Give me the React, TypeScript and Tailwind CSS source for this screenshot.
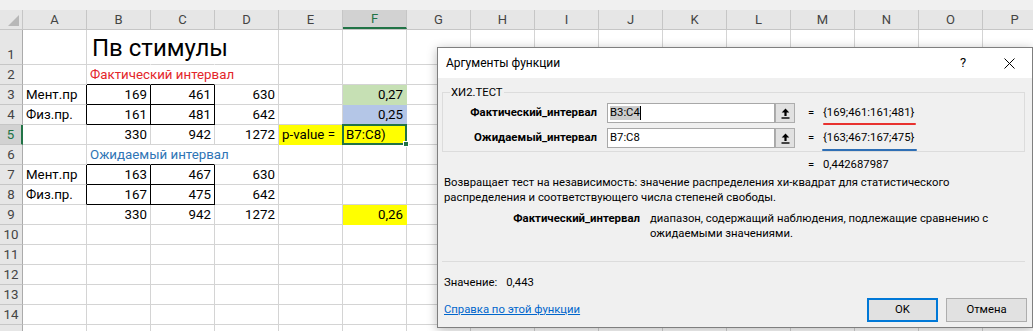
import React from 'react';

type CellSpec = {
  t?: string;
  right?: boolean;
  big?: boolean;
  txt?: string;
  bg?: string;
  rc?: string;
  bc?: string;
  sel?: boolean;
};

const COLS = ['A', 'B', 'C', 'D', 'E', 'F', 'G', 'H', 'I', 'J', 'K', 'L', 'M', 'N', 'O', 'P'];

const ROWS: Record<number, Record<string, CellSpec>> = {
  1: {
    B: { t: 'Пв стимулы', big: true, rc: 'border-r-white' },
    C: { rc: 'border-r-white' },
  },
  2: {
    B: { t: 'Фактический интервал', txt: 'text-[#e3262b]', rc: 'border-r-white', bc: 'border-b-black' },
    C: { rc: 'border-r-white', bc: 'border-b-black' },
  },
  3: {
    A: { t: 'Мент.пр', rc: 'border-r-black' },
    B: { t: '169', right: true, rc: 'border-r-black', bc: 'border-b-black' },
    C: { t: '461', right: true, rc: 'border-r-black', bc: 'border-b-black' },
    D: { t: '630', right: true },
    F: { t: '0,27', right: true, bg: 'bg-[#c6e0b4]', rc: 'border-r-[#c6e0b4]', bc: 'border-b-[#c6e0b4]' },
  },
  4: {
    A: { t: 'Физ.пр.', rc: 'border-r-black' },
    B: { t: '161', right: true, rc: 'border-r-black', bc: 'border-b-black' },
    C: { t: '481', right: true, rc: 'border-r-black', bc: 'border-b-black' },
    D: { t: '642', right: true },
    F: { t: '0,25', right: true, bg: 'bg-[#b4c6e7]', rc: 'border-r-[#b4c6e7]', bc: 'border-b-[#b4c6e7]' },
  },
  5: {
    B: { t: '330', right: true },
    C: { t: '942', right: true },
    D: { t: '1272', right: true },
    E: { t: 'p-value =', bg: 'bg-[#ffff00]', rc: 'border-r-[#ffff00]', bc: 'border-b-[#ffff00]' },
    F: { t: 'B7:C8)', bg: 'bg-[#ffff00]', rc: 'border-r-[#ffff00]', bc: 'border-b-[#ffff00]', sel: true },
  },
  6: {
    B: { t: 'Ожидаемый интервал', txt: 'text-[#2f75b5]', rc: 'border-r-white', bc: 'border-b-black' },
    C: { rc: 'border-r-white', bc: 'border-b-black' },
  },
  7: {
    A: { t: 'Мент.пр', rc: 'border-r-black' },
    B: { t: '163', right: true, rc: 'border-r-black', bc: 'border-b-black' },
    C: { t: '467', right: true, rc: 'border-r-black', bc: 'border-b-black' },
    D: { t: '630', right: true },
  },
  8: {
    A: { t: 'Физ.пр.', rc: 'border-r-black' },
    B: { t: '167', right: true, rc: 'border-r-black', bc: 'border-b-black' },
    C: { t: '475', right: true, rc: 'border-r-black', bc: 'border-b-black' },
    D: { t: '642', right: true },
  },
  9: {
    B: { t: '330', right: true },
    C: { t: '942', right: true },
    D: { t: '1272', right: true },
    F: { t: '0,26', right: true, bg: 'bg-[#ffff00]', rc: 'border-r-[#ffff00]', bc: 'border-b-[#ffff00]' },
  },
};

function GridCell({ spec }: { spec?: CellSpec }) {
  const s = spec || {};
  const rc = s.rc ?? 'border-r-[#d4d4d4]';
  const bc = s.bc ?? 'border-b-[#d4d4d4]';
  const bg = s.bg ?? 'bg-white';
  return (
    <div
      className={`relative w-[64px] h-full shrink-0 border-r border-b ${rc} ${bc} ${bg} flex items-end px-[3px] whitespace-nowrap ${
        s.right ? 'justify-end' : 'justify-start'
      }`}
    >
      {s.t && (
        <span
          className={`relative z-10 ${s.big ? 'text-[24px] leading-[30px] pb-[1px] pl-[2px]' : 'text-[13.3px] leading-[18px]'} ${
            s.txt ?? 'text-black'
          }`}
        >
          {s.t}
        </span>
      )}
      {s.sel && (
        <div className="absolute -left-[1px] -top-[1px] w-[65px] h-[21px] border-2 border-[#217346] z-20">
          <div className="absolute -right-[4px] -bottom-[4px] w-[6px] h-[6px] bg-[#217346] border border-white" />
        </div>
      )}
    </div>
  );
}

function Sheet() {
  const rowNums = Array.from({ length: 15 }, (_, i) => i + 1);
  return (
    <div className="flex flex-col">
      <div className="h-[10px] bg-[#f0f0f0]" />
      <div className="flex h-[20px] bg-[#e6e6e6] border-b border-[#c6c6c6]">
        <div className="relative w-[23px] shrink-0 border-r border-[#c6c6c6]">
          <svg className="absolute right-[3px] bottom-[3px]" width="11" height="11" viewBox="0 0 11 11">
            <path d="M11 0 L11 11 L0 11 Z" fill="#b8b8b8" />
          </svg>
        </div>
        {COLS.map((c) =>
          c === 'F' ? (
            <div
              key={c}
              className="w-[64px] shrink-0 border-r border-[#c6c6c6] bg-[#d2d2d2] flex items-center justify-center text-[13px] text-[#217346] border-b-2 border-b-[#217346]"
            >
              {c}
            </div>
          ) : (
            <div
              key={c}
              className="w-[64px] shrink-0 border-r border-[#c6c6c6] flex items-center justify-center text-[13px] text-[#444444]"
            >
              {c}
            </div>
          )
        )}
      </div>
      {rowNums.map((r) => (
        <div key={r} className={`flex ${r === 1 ? 'h-[35px]' : 'h-[20px]'}`}>
          {r === 5 ? (
            <div className="w-[23px] shrink-0 bg-[#d2d2d2] border-b border-b-[#c6c6c6] border-r-2 border-r-[#217346] flex items-end justify-center text-[13.3px] leading-[18px] text-[#217346]">
              {r}
            </div>
          ) : (
            <div className="w-[23px] shrink-0 bg-[#e6e6e6] border-b border-b-[#c6c6c6] border-r border-r-[#ababab] flex items-end justify-center text-[13.3px] leading-[18px] text-[#444444]">
              {r < 15 ? r : ''}
            </div>
          )}
          {COLS.map((c) => (
            <GridCell key={c} spec={ROWS[r]?.[c]} />
          ))}
        </div>
      ))}
    </div>
  );
}

function CollapseBtn() {
  return (
    <div className="w-[20px] h-[20px] shrink-0 border border-[#adadad] bg-[#e1e1e1] flex items-center justify-center">
      <svg width="9" height="11" viewBox="0 0 9 11">
        <path d="M4.5 0.5 L8.3 4.6 H5.6 V8 H3.4 V4.6 H0.7 Z" fill="#000" />
        <rect x="0.5" y="9.3" width="8" height="1.4" fill="#000" />
      </svg>
    </div>
  );
}

function Dialog() {
  return (
    <div className="absolute left-[437px] top-[47px] w-[596px] h-[281px] border border-[#7f7f7f] bg-[#f0f0f0] shadow-[0_2px_10px_rgba(0,0,0,0.28)] flex flex-col text-[11.3px] text-black">
      <div className="h-[30px] shrink-0 bg-white flex items-center">
        <div className="flex-1 pl-[8px] text-[12px]">Аргументы функции</div>
        <div className="w-[46px] h-full flex items-center justify-center text-[13px]">?</div>
        <div className="w-[46px] h-full flex items-center justify-center">
          <svg width="11" height="11" viewBox="0 0 11 11">
            <path d="M0.5 0.5 L10.5 10.5 M10.5 0.5 L0.5 10.5" stroke="#000" strokeWidth="1" />
          </svg>
        </div>
      </div>
      <div className="flex flex-col">
        <div className="relative mt-[14px] ml-[4px] mr-[7px] border border-[#dcdcdc] pt-[10px] pb-[3px] flex flex-col gap-[5px]">
          <div className="absolute -top-[8px] left-[7px] bg-[#f0f0f0] px-[1px] leading-[15px]">ХИ2.ТЕСТ</div>
          <div className="flex items-center h-[20px]">
            <div className="w-[154px] text-right font-bold text-[11.4px] whitespace-nowrap">Фактический_интервал</div>
            <div className="ml-[10px] w-[168px] h-[20px] bg-white border border-[#a8a8a8] flex items-center px-[2px]">
              <span className="bg-[#cccccc] leading-[14px]">B3:C4</span>
              <span className="w-px h-[14px] bg-black" />
            </div>
            <CollapseBtn />
            <div className="ml-[13px] w-[15px]">=</div>
            <div className="relative">
              {'{169;461:161;481}'}
              <div className="absolute left-0 -right-[2px] -bottom-[4px] h-[2px] rounded-full bg-[#e8322f]" />
            </div>
          </div>
          <div className="flex items-center h-[20px]">
            <div className="w-[154px] text-right font-bold text-[11.4px] whitespace-nowrap">Ожидаемый_интервал</div>
            <div className="ml-[10px] w-[168px] h-[20px] bg-white border border-[#a8a8a8] flex items-center px-[2px]">
              <span className="leading-[14px]">B7:C8</span>
            </div>
            <CollapseBtn />
            <div className="ml-[13px] w-[15px]">=</div>
            <div className="relative">
              {'{163;467:167;475}'}
              <div className="absolute -left-[1px] -right-[3px] -bottom-[5px] h-[2px] rounded-full bg-[#2f6fb5]" />
            </div>
          </div>
        </div>
        <div className="mt-[5px] pl-[370px] leading-[15px] flex">
          <span className="w-[15px]">=</span>
          <span>0,442687987</span>
        </div>
        <div className="mt-[3px] pl-[6px] leading-[15px]">
          Возвращает тест на независимость: значение распределения хи-квадрат для статистического
          <br />
          распределения и соответствующего числа степеней свободы.
        </div>
        <div className="mt-[6px] flex leading-[15px]">
          <div className="w-[202px] text-right font-bold text-[11.4px] whitespace-nowrap">Фактический_интервал</div>
          <div className="ml-[10px]">
            диапазон, содержащий наблюдения, подлежащие сравнению с
            <br />
            ожидаемыми значениями.
          </div>
        </div>
        <div className="mt-[20px] ml-[4px] mr-[7px] h-px bg-[#dcdcdc]" />
        <div className="mt-[13px] pl-[6px] leading-[15px] flex">
          <span>Значение:</span>
          <span className="ml-[9px]">0,443</span>
        </div>
        <div className="mt-[8px] pl-[6px] pr-[5px] flex items-center h-[24px]">
          <span className="flex-1 text-[#0066cc] underline">Справка по этой функции</span>
          <div className="w-[71px] h-[24px] border-2 border-[#0078d7] bg-[#e1e1e1] flex items-center justify-center">OK</div>
          <div className="ml-[8px] w-[81px] h-[24px] border border-[#adadad] bg-[#e1e1e1] flex items-center justify-center">
            Отмена
          </div>
        </div>
      </div>
    </div>
  );
}

export default function App() {
  return (
    <div className="relative w-[1033px] h-[331px] overflow-hidden bg-white font-['Roboto',sans-serif]">
      <Sheet />
      <Dialog />
    </div>
  );
}
